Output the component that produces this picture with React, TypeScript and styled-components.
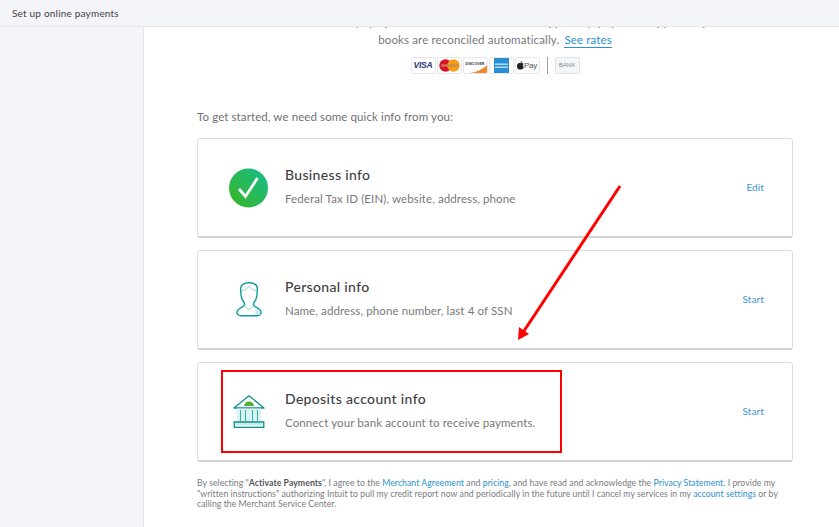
import React from "react";
import styled, { createGlobalStyle } from "styled-components";

const Global = createGlobalStyle`
  html, body { margin: 0; padding: 0; background: #fff; }
  body { font-family: Lato, "Open Sans", "Liberation Sans", sans-serif; color: #6b6c72; }
`;

const Page = styled.div`
  width: 839px; height: 527px; overflow: hidden; position: relative;
  display: flex; flex-direction: column; background: #fff;
`;
const TopBar = styled.header`
  height: 26px; flex: none; display: flex; align-items: center; padding-left: 12px;
  background: #f4f5f8; border-bottom: 1px solid #e3e5e9;
  font-size: 10px; letter-spacing: 0.2px; color: #404145;
`;
const Body = styled.div`flex: 1; display: flex; min-height: 0;`;
const Sidebar = styled.aside`
  width: 143px; flex: none; background: #f4f5f8; border-right: 1px solid #e6e7eb;
`;
const Main = styled.main`flex: 1; overflow: hidden; min-width: 0;`;
const Scrolled = styled.div`
  margin-top: -14px; padding: 0 46px 0 53px; width: 596px; box-sizing: content-box;
`;
const Intro = styled.p`
  margin: 0; text-align: center; font-size: 11.5px; line-height: 18px; letter-spacing: 0.14px; color: #77787d;
`;
const SeeRates = styled.a`
  color: #2c91d0; margin-left: 2px; padding-bottom: 1px; border-bottom: 1px solid #2c91d0;
`;
const Logos = styled.div`
  display: flex; justify-content: center; align-items: center; gap: 1px; margin-top: 7px; height: 18px;
`;
const PayCard = styled.div`
  width: 25px; height: 17px; box-sizing: border-box; border: 1px solid #e6e8ec; border-radius: 2px; background: #fff;
  display: flex; align-items: center; justify-content: center; overflow: hidden; position: relative;
`;
const VisaText = styled.span`font: italic 700 8.5px "Liberation Sans", sans-serif; color: #26337a; letter-spacing: -0.2px;`;
const DiscoverText = styled.span`font: 700 3.6px "Liberation Sans", sans-serif; color: #333; margin-top: -3px;`;
const PayText = styled.span`font: 400 8px "Liberation Sans", sans-serif; color: #555; letter-spacing: -0.2px;`;
const Divider = styled.div`width: 1px; height: 17px; background: #b39b8f; margin: 0 6px 0 6px;`;
const BankBadge = styled.div`
  width: 25px; height: 17px; box-sizing: border-box; border: 1px solid #dfe3e8; border-radius: 2px; background: #f5f6f8;
  display: flex; align-items: center; justify-content: center;
  font: 400 6px "Liberation Sans", sans-serif; color: #7d8794;
`;
const Lead = styled.p`
  margin: 35px 0 0; font-size: 11.5px; line-height: 16px; letter-spacing: 0.1px; color: #6f7075;
`;
const Cards = styled.div`display: flex; flex-direction: column; gap: 12px; margin-top: 13px;`;
const Card = styled.section`
  height: 100px; box-sizing: border-box; display: flex; align-items: center; background: #fff;
  border: 1px solid #dcdde1; border-bottom: 2px solid #cfd1d6; border-radius: 3px;
`;
const IconSlot = styled.div`
  width: 40px; flex: none; margin: 0 16px 0 31px; display: flex; align-items: center; justify-content: center;
`;
const CardText = styled.div`flex: 1; display: flex; flex-direction: column; gap: 8px; padding-bottom: 3px;`;
const CardTitle = styled.h3`
  margin: 0; font-size: 14px; line-height: 17px; font-weight: 500; letter-spacing: 0.33px; color: #3f4044;
`;
const CardDesc = styled.p`
  margin: 0; font-size: 11.5px; line-height: 15px; letter-spacing: 0.11px; color: #77787d;
`;
const Action = styled.a`
  font-size: 10px; line-height: 12px; padding-bottom: 1px; color: #3b94d4; letter-spacing: 0.1px; margin-right: 28px;
`;
const Legal = styled.p`
  margin: 16px 0 0; font-size: 8.7px; line-height: 10.5px; color: #7a7b80; letter-spacing: 0.05px; width: 590px;
`;
const LegalLink = styled.a`color: #2c91d0;`;
const LegalBold = styled.b`color: #55565a;`;
const Highlight = styled.div`
  position: absolute; left: 221px; top: 370px; width: 341px; height: 83px; box-sizing: border-box;
  border: 2px solid #f00; pointer-events: none;
`;
const ArrowSvg = styled.svg`position: absolute; left: 510px; top: 180px; pointer-events: none;`;

const Check = () => (
  <svg width="40" height="40" viewBox="0 0 40 40">
    <defs>
      <linearGradient id="g" x1="0" y1="1" x2="1" y2="0">
        <stop offset="0" stopColor="#3cb521" />
        <stop offset="1" stopColor="#14bd8f" />
      </linearGradient>
    </defs>
    <circle cx="19.5" cy="20" r="19.5" fill="url(#g)" />
    <path d="M10 21 L16.5 28.5 L28.5 10" fill="none" stroke="#fff" strokeWidth="2.8" />
  </svg>
);
const Person = () => (
  <svg width="26" height="35" viewBox="0 0 26 35" fill="none" stroke="#0f9c96" strokeWidth="1.4" strokeLinejoin="round">
    <path d="M21 33 L21.2 33.8 L5 33.8 C2 33.8 0.7 32 1 29.8 C1.5 26.5 6.5 25.5 8.4 23.6 L8.4 20.8 C6.5 19 5.4 16 5 13 L4.6 6.8 C4.6 3 8 0.8 13 0.8 C18 0.8 21.4 3 21.4 6.8 L21 13 C20.6 16 19.5 19 17.6 20.8 L17.6 23.6 C19.5 25.5 24.5 26.5 25 29.8 C25.3 32 24 33.8 21.2 33.8" />
    <path d="M5 9 C9 8.5 12 6.5 13 4 C15 7 18 8.5 21 8.8" strokeWidth="0.7" stroke="#6cc6c2" />
    <path d="M9 24.5 L13 27.5 L17 24.5" strokeWidth="0.7" stroke="#6cc6c2" />
    <path d="M19.5 33 L24 33 L24.2 30 L19 27.5 Z" fill="#c5ecea" stroke="none" />
  </svg>
);
const Bank = () => (
  <svg width="32" height="33" viewBox="0 0 32 33" fill="none">
    <path d="M1 13 L16 0.8 L31 13 Z" stroke="#0e8f8a" strokeWidth="1.3" strokeLinejoin="round" fill="#fff" />
    <path d="M11 11 A5 4.5 0 0 1 21 11 Z" fill="#53b32f" />
    <rect x="4" y="13.5" width="24" height="13.5" fill="#d9f3f2" />
    <path d="M7.5 15 V26 M12.5 15 V26 M19.5 15 V26 M24.5 15 V26" stroke="#35b0ab" strokeWidth="1" />
    <path d="M1.2 27 H30.8 V32.3 H1.2 Z" stroke="#0e8f8a" strokeWidth="1.3" fill="#e6f7f6" />
    <path d="M3 29 H29" stroke="#a5e0dd" strokeWidth="1" />
  </svg>
);

const Mastercard = () => (
  <svg width="21" height="13" viewBox="0 0 21 13">
    <circle cx="6.5" cy="6.5" r="6.2" fill="#d9122a" />
    <circle cx="14.5" cy="6.5" r="6.2" fill="#f59c1a" />
    <rect x="2" y="5.2" width="17" height="2.6" fill="#c98a4b" opacity="0.8" />
  </svg>
);
const DiscoverSwoosh = styled.svg`position: absolute; right: 0; bottom: 0;`;
const Amex = () => (
  <svg width="15" height="15" viewBox="0 0 15 15">
    <rect width="15" height="15" fill="#2a8fd2" />
    <rect x="1" y="5.5" width="13" height="1.4" fill="#bfe0f5" />
    <rect x="1" y="8.5" width="13" height="1.4" fill="#bfe0f5" />
  </svg>
);
const Apple = () => (
  <svg width="7" height="9" viewBox="0 0 7 9">
    <path d="M3.5 2.3 C4.5 1.6 6 1.8 6.6 2.9 C5.4 3.6 5.6 5.3 6.9 5.8 C6.4 7.2 5.5 8.6 4.6 8.6 C4 8.6 3.8 8.3 3.2 8.3 C2.6 8.3 2.4 8.6 1.8 8.6 C0.8 8.6 0 6.8 0 5 C0 3 1.6 1.6 3.5 2.3 Z M3.5 2 C3.4 1 4.2 0.2 5 0 C5.2 1 4.4 2 3.5 2 Z" fill="#222" />
  </svg>
);

const rows = [
  { title: "Business info", desc: "Federal Tax ID (EIN), website, address, phone", action: "Edit", icon: <Check /> },
  { title: "Personal info", desc: "Name, address, phone number, last 4 of SSN", action: "Start", icon: <Person /> },
  { title: "Deposits account info", desc: "Connect your bank account to receive payments.", action: "Start", icon: <Bank /> },
];

export default function App() {
  return (
    <Page>
      <Global />
      <TopBar>Set up online payments</TopBar>
      <Body>
        <Sidebar />
        <Main>
          <Scrolled>
            <Intro>
              When customers pay by credit card, bank transfer, or Apple Pay, payments appear in your
              <br />
              books are reconciled automatically. <SeeRates>See rates</SeeRates>
            </Intro>
            <Logos>
              <PayCard><VisaText>VISA</VisaText></PayCard>
              <PayCard><Mastercard /></PayCard>
              <PayCard>
                <DiscoverText>DISCOVER</DiscoverText>
                <DiscoverSwoosh width="23" height="15" viewBox="0 0 23 15"><path d="M23 7 V15 H6 C13 14 19 11 23 7 Z" fill="#ee8a2c" /></DiscoverSwoosh>
              </PayCard>
              <PayCard><Amex /></PayCard>
              <PayCard><Apple /><PayText>Pay</PayText></PayCard>
              <Divider />
              <BankBadge>BANK</BankBadge>
            </Logos>
            <Lead>To get started, we need some quick info from you:</Lead>
            <Cards>
              {rows.map((r) => (
                <Card key={r.title}>
                  <IconSlot>{r.icon}</IconSlot>
                  <CardText>
                    <CardTitle>{r.title}</CardTitle>
                    <CardDesc>{r.desc}</CardDesc>
                  </CardText>
                  <Action>{r.action}</Action>
                </Card>
              ))}
            </Cards>
            <Legal>
              By selecting "<LegalBold>Activate Payments</LegalBold>", I agree to the <LegalLink>Merchant Agreement</LegalLink> and <LegalLink>pricing</LegalLink>, and have read and acknowledge the <LegalLink>Privacy Statement.</LegalLink> I provide my "written instructions" authorizing Intuit to pull my credit report now and periodically in the future until I cancel my services in my <LegalLink>account settings</LegalLink> or by calling the Merchant Service Center.
            </Legal>
          </Scrolled>
        </Main>
      </Body>
      <Highlight />
      <ArrowSvg width="115" height="165" viewBox="0 0 115 165">
        <path d="M110 6 L12 154" stroke="#f00" strokeWidth="3" fill="none" />
        <path d="M8 160 L9 147 L19 154 Z" fill="#f00" />
      </ArrowSvg>
    </Page>
  );
}
